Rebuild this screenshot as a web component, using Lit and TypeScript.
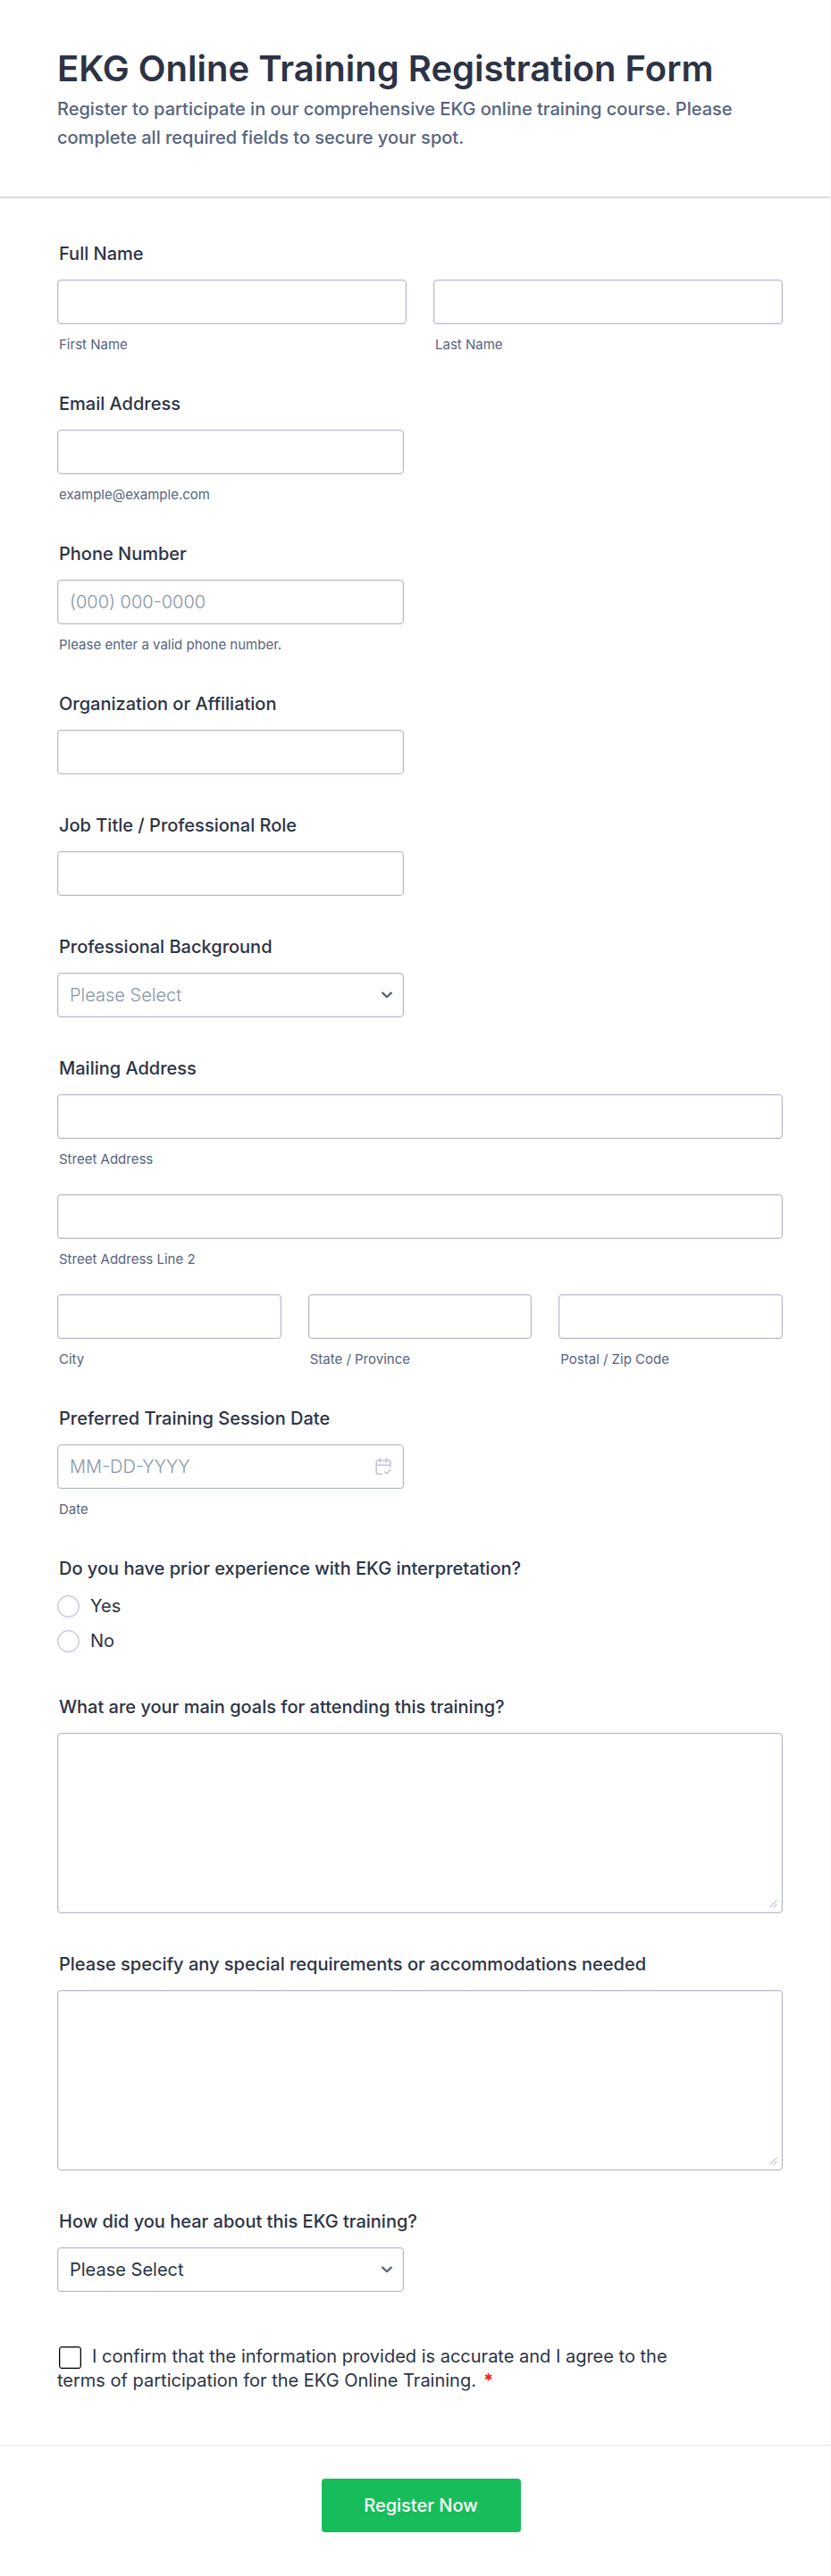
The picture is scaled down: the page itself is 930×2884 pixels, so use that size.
import { LitElement, html, css } from "lit";
import { customElement } from "lit/decorators.js";

const chevron = html`<svg class="chevron" viewBox="0 0 14 14" aria-hidden="true">
  <path d="M2.2 4.6 L7 9.2 L11.8 4.6" fill="none" stroke="#565e77" stroke-width="2.2" stroke-linecap="round" stroke-linejoin="round" />
</svg>`;

const calendar = html`<svg class="calendar" viewBox="0 0 18 20" fill="none" stroke="#c3c6d6" stroke-width="1.6" stroke-linecap="round" stroke-linejoin="round" aria-hidden="true">
  <path d="M7.4 18.2H3.2a2 2 0 0 1-2-2V5a2 2 0 0 1 2-2h11.6a2 2 0 0 1 2 2v5.4" />
  <path d="M1.2 8.2h15.6M5.2 1v4M12.4 1v4M10.8 15.8l2.2 2 3.8-4.4" />
</svg>`;

const grip = html`<svg class="grip" viewBox="0 0 9 9" fill="none" stroke="#bfc2d3" stroke-width="1.1" stroke-linecap="round" aria-hidden="true">
  <path d="M0.8 8.2 8.2 0.8M5 8.2 8.2 5" />
</svg>`;

@customElement("app-root")
export class AppRoot extends LitElement {
  static styles = css`
    :host {
      display: block;
      background: #fff;
      border-right: 1px solid #f7f7fa;
      color: #2c3345;
      font-family: Inter, "Liberation Sans", sans-serif;
      font-size: 20px;
      line-height: 24px;
    }
    *, *::before, *::after { box-sizing: border-box; }
    .header {
      padding: 52px 53px 50px 64px;
      border-bottom: 2px solid #dcdde8;
    }
    h1 { margin: 0; font-size: 40px; line-height: 50px; font-weight: 600; }
    .intro { margin: 4px 0 0; font-weight: 500; line-height: 32px; color: #57647e; max-width: 780px; }
    .fields {
      display: flex;
      flex-direction: column;
      gap: 45px;
      padding: 50px 53px 58px 64px;
    }
    .field { border: 0; margin: 0; padding: 0; min-width: 0; display: block; }
    .label {
      display: block;
      padding: 0 0 0 2px;
      margin-bottom: 17px;
      font-weight: 500;
      line-height: 24px;
    }
    .half .box, .half .control { max-width: 388px; }
    .grid { display: grid; column-gap: 30px; row-gap: 30px; }
    .two { grid-template-columns: 1fr 1fr; }
    .three { grid-template-columns: 1fr 1fr 1fr; }
    .wide { grid-column: 1 / -1; }
    .control { position: relative; display: block; }
    .box {
      display: block;
      width: 100%;
      height: 50px;
      margin: 0;
      padding: 0 13px;
      border: 1px solid #b6bbca;
      border-radius: 4px;
      box-shadow: inset 0 0 0 1px #eceef4;
      background: #fff;
      color: #2c3345;
      font: inherit;
      appearance: none;
      outline: none;
    }
    .light { font-weight: 300; color: #8796aa; }
    .box::placeholder { color: #8796aa; font-weight: 300; opacity: 1; }
    textarea.box { height: 202px; padding: 12px 13px; resize: none; }
    .sub {
      display: block;
      padding: 14px 0 0 2px;
      font-size: 15px;
      line-height: 18px;
      color: #57647e;
    }
    .chevron, .calendar, .grip { position: absolute; pointer-events: none; }
    .chevron { width: 14px; height: 14px; right: 12px; top: 18px; }
    .calendar { width: 18px; height: 20px; right: 14px; top: 15px; }
    .grip { width: 9px; height: 9px; right: 6px; bottom: 6px; }
    .radios { display: flex; flex-direction: column; gap: 13px; padding-bottom: 4px; }
    .option { display: flex; align-items: center; gap: 12px; line-height: 26px; }
    .radio {
      appearance: none;
      width: 25px;
      height: 25px;
      margin: 0;
      border: 1px solid #b6bbca;
      border-radius: 50%;
      box-shadow: inset 0 0 0 1px #eceef4;
      background: #fff;
    }
    .terms { max-width: 700px; line-height: 27px; padding-top: 14px; }
    .check {
      appearance: none;
      width: 25px;
      height: 25px;
      margin: 0 12px 0 2px;
      border: 1px solid #000;
      border-radius: 3px;
      box-shadow: inset 0 0 0 1px #b4b4be;
      background: #fff;
      vertical-align: middle;
    }
    .required { color: #ff1a12; font-weight: 700; margin-left: 8px; }
    .footer {
      display: flex;
      justify-content: center;
      padding: 37px 53px 49px 66px;
      border-top: 1px solid #e3e5f1;
    }
    .submit {
      min-width: 223px;
      height: 60px;
      border: 0;
      border-radius: 4px;
      background: #18bd5b;
      color: #fff;
      font: inherit;
      font-weight: 500;
    }
  `;

  private input(id: string, sub = "", type = "text", placeholder = "") {
    return html`<input class="box" id=${id} name=${id} type=${type} placeholder=${placeholder} />
      ${sub ? html`<label class="sub" for=${id}>${sub}</label>` : ""}`;
  }

  private single(id: string, label: string, sub = "", type = "text", placeholder = "") {
    return html`<div class="field half">
      <label class="label" for=${id}>${label}</label>
      ${this.input(id, sub, type, placeholder)}
    </div>`;
  }

  private choice(id: string, label: string, light = false) {
    return html`<div class="field half">
      <label class="label" for=${id}>${label}</label>
      <span class="control">
        <select class="box ${light ? "light" : ""}" id=${id} name=${id}>
          <option value="">Please Select</option>
        </select>
        ${chevron}
      </span>
    </div>`;
  }

  private area(id: string, label: string) {
    return html`<div class="field">
      <label class="label" for=${id}>${label}</label>
      <span class="control"><textarea class="box" id=${id} name=${id}></textarea>${grip}</span>
    </div>`;
  }

  render() {
    return html`<form @submit=${(e: Event) => e.preventDefault()}>
      <header class="header">
        <h1>EKG Online Training Registration Form</h1>
        <p class="intro">Register to participate in our comprehensive EKG online training course. Please complete all required fields to secure your spot.</p>
      </header>
      <div class="fields">
        <fieldset class="field">
          <legend class="label">Full Name</legend>
          <div class="grid two">
            <div>${this.input("first", "First Name")}</div>
            <div>${this.input("last", "Last Name")}</div>
          </div>
        </fieldset>
        ${this.single("email", "Email Address", "example@example.com", "email")}
        ${this.single("phone", "Phone Number", "Please enter a valid phone number.", "tel", "(000) 000-0000")}
        ${this.single("organization", "Organization or Affiliation")}
        ${this.single("job", "Job Title / Professional Role")}
        ${this.choice("background", "Professional Background", true)}
        <fieldset class="field">
          <legend class="label">Mailing Address</legend>
          <div class="grid three">
            <div class="wide">${this.input("street", "Street Address")}</div>
            <div class="wide">${this.input("street2", "Street Address Line 2")}</div>
            <div>${this.input("city", "City")}</div>
            <div>${this.input("state", "State / Province")}</div>
            <div>${this.input("zip", "Postal / Zip Code")}</div>
          </div>
        </fieldset>
        <fieldset class="field half">
          <legend class="label">Preferred Training Session Date</legend>
          <span class="control">
            <input class="box" id="date" name="date" type="text" placeholder="MM-DD-YYYY" />
            ${calendar}
          </span>
          <label class="sub" for="date">Date</label>
        </fieldset>
        <fieldset class="field">
          <legend class="label">Do you have prior experience with EKG interpretation?</legend>
          <div class="radios">
            <label class="option"><input class="radio" type="radio" name="experience" value="yes" />Yes</label>
            <label class="option"><input class="radio" type="radio" name="experience" value="no" />No</label>
          </div>
        </fieldset>
        ${this.area("goals", "What are your main goals for attending this training?")}
        ${this.area("needs", "Please specify any special requirements or accommodations needed")}
        ${this.choice("source", "How did you hear about this EKG training?")}
        <div class="terms">
          <input class="check" id="terms" name="terms" type="checkbox" required /><label for="terms">I confirm that the information provided is accurate and I agree to the terms of participation for the EKG Online Training.</label><span class="required">*</span>
        </div>
      </div>
      <footer class="footer"><button class="submit" type="submit">Register Now</button></footer>
    </form>`;
  }
}
